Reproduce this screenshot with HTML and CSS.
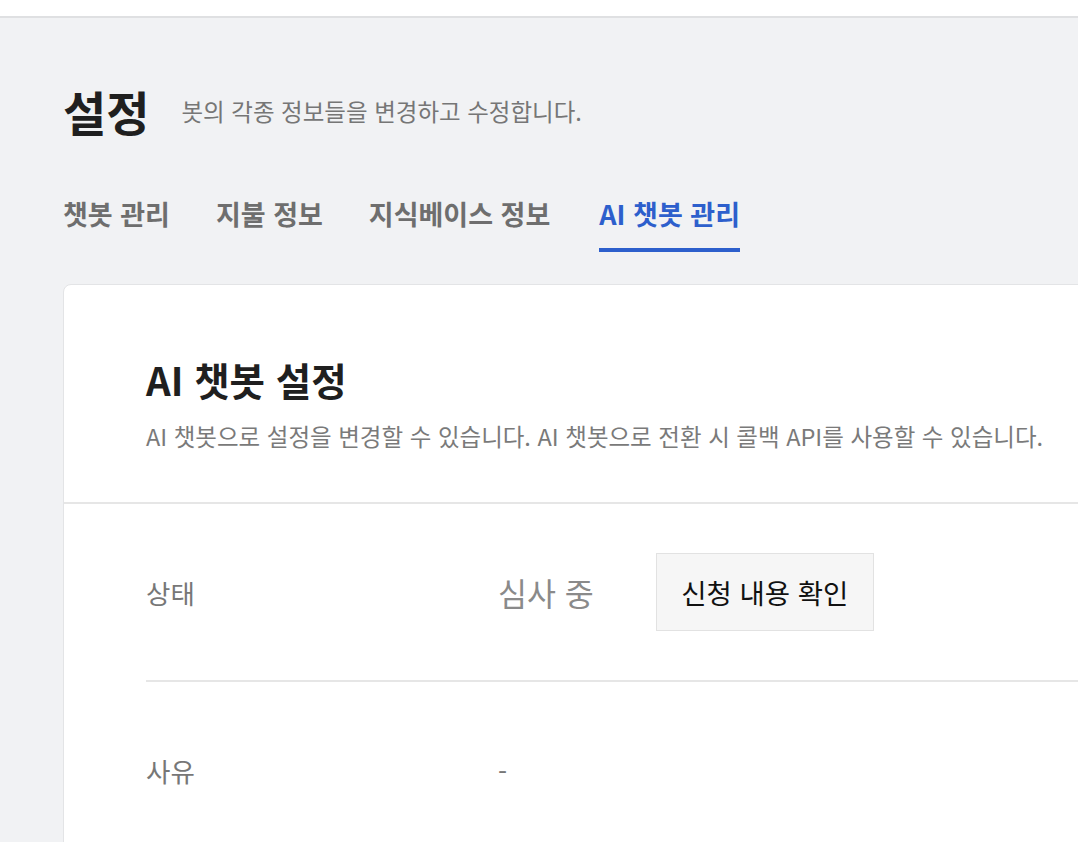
FILE: index.html
```html
<!DOCTYPE html>
<html lang="ko">
<head>
    <meta charset="UTF-8">
    <meta name="viewport" content="width=device-width, initial-scale=1.0">
    <title>설정</title>
    <link rel="stylesheet" href="styles.css">
</head>
<body>
<div class="topbar"></div>
<div class="page">
    <div class="page-head">
        <h1>설정</h1>
        <p>봇의 각종 정보들을 변경하고 수정합니다.</p>
    </div>

    <nav class="tabs">
        <a class="tab">챗봇 관리</a>
        <a class="tab">지불 정보</a>
        <a class="tab">지식베이스 정보</a>
        <a class="tab active">AI 챗봇 관리</a>
    </nav>

    <div class="card">
        <div class="card-head">
            <h2>AI 챗봇 설정</h2>
            <p>AI 챗봇으로 설정을 변경할 수 있습니다. AI 챗봇으로 전환 시 콜백 API를 사용할 수 있습니다.</p>
        </div>
        <div class="card-body">
            <div class="row">
                <div class="label">상태</div>
                <div class="value">
                    <span class="status">심사 중</span>
                    <button type="button">신청 내용 확인</button>
                </div>
            </div>
            <div class="row">
                <div class="label">사유</div>
                <div class="value">
                    <span class="reason">-</span>
                </div>
            </div>
        </div>
    </div>
</div>
</body>
</html>
```

FILE: styles.css
```css
body {
    font-family: "Noto Sans CJK KR", "Noto Sans", sans-serif;
    margin: 0;
    padding: 0;
    background-color: #f1f2f4;
    overflow: hidden;
}
.topbar {
    height: 16px;
    background: white;
    border-bottom: 2px solid #dfe0e2;
}
.page {
    padding-left: 63px;
}
.page-head {
    display: flex;
    align-items: center;
    padding-top: 70px;
}
.page-head h1 {
    margin: 0;
    font-size: 47px;
    line-height: 46px;
    font-weight: bold;
    color: #1f1f1f;
}
.page-head p {
    margin: 0 0 0 32px;
    font-size: 23.5px;
    line-height: 24px;
    color: #767676;
}
.tabs {
    display: flex;
    gap: 46px;
    margin-top: 66px;
}
.tab {
    font-size: 27px;
    line-height: 27px;
    font-weight: bold;
    color: #6e6e6e;
    padding-bottom: 21px;
    border-bottom: 4px solid transparent;
    cursor: pointer;
}
.tab.active {
    margin-left: 3px;
    color: #2d5fcc;
    border-bottom-color: #2d5fcc;
}
.card {
    margin-top: 32px;
    margin-right: -40px;
    background: white;
    border: 1px solid #e3e4e6;
    border-radius: 8px 0 0 0;
    min-height: 600px;
}
.card-head {
    padding: 75px 0 54px 82px;
    border-bottom: 2px solid #e6e6e6;
}
.card-head h2 {
    margin: 0;
    font-size: 38.5px;
    line-height: 38px;
    font-weight: bold;
    color: #1f1f1f;
}
.card-head p {
    margin: 26px 0 0;
    font-size: 23.5px;
    line-height: 24px;
    color: #7a7a7a;
}
.card-body {
    padding-left: 82px;
}
.row {
    display: flex;
    align-items: center;
    padding: 49px 0;
    border-bottom: 2px solid #e6e6e6;
}
.row:last-child {
    border-bottom: none;
}
.label {
    width: 352px;
    font-size: 26.5px;
    color: #777;
}
.value {
    display: flex;
    align-items: center;
    height: 78px;
}
.status {
    font-size: 31.5px;
    color: #8a8a8a;
}
.reason {
    font-size: 26px;
    color: #777;
}
button {
    margin-left: 62px;
    width: 218px;
    height: 78px;
    background: #f6f6f6;
    border: 1px solid #e2e2e2;
    font-family: inherit;
    font-size: 27.5px;
    color: #111;
    cursor: pointer;
}
```
